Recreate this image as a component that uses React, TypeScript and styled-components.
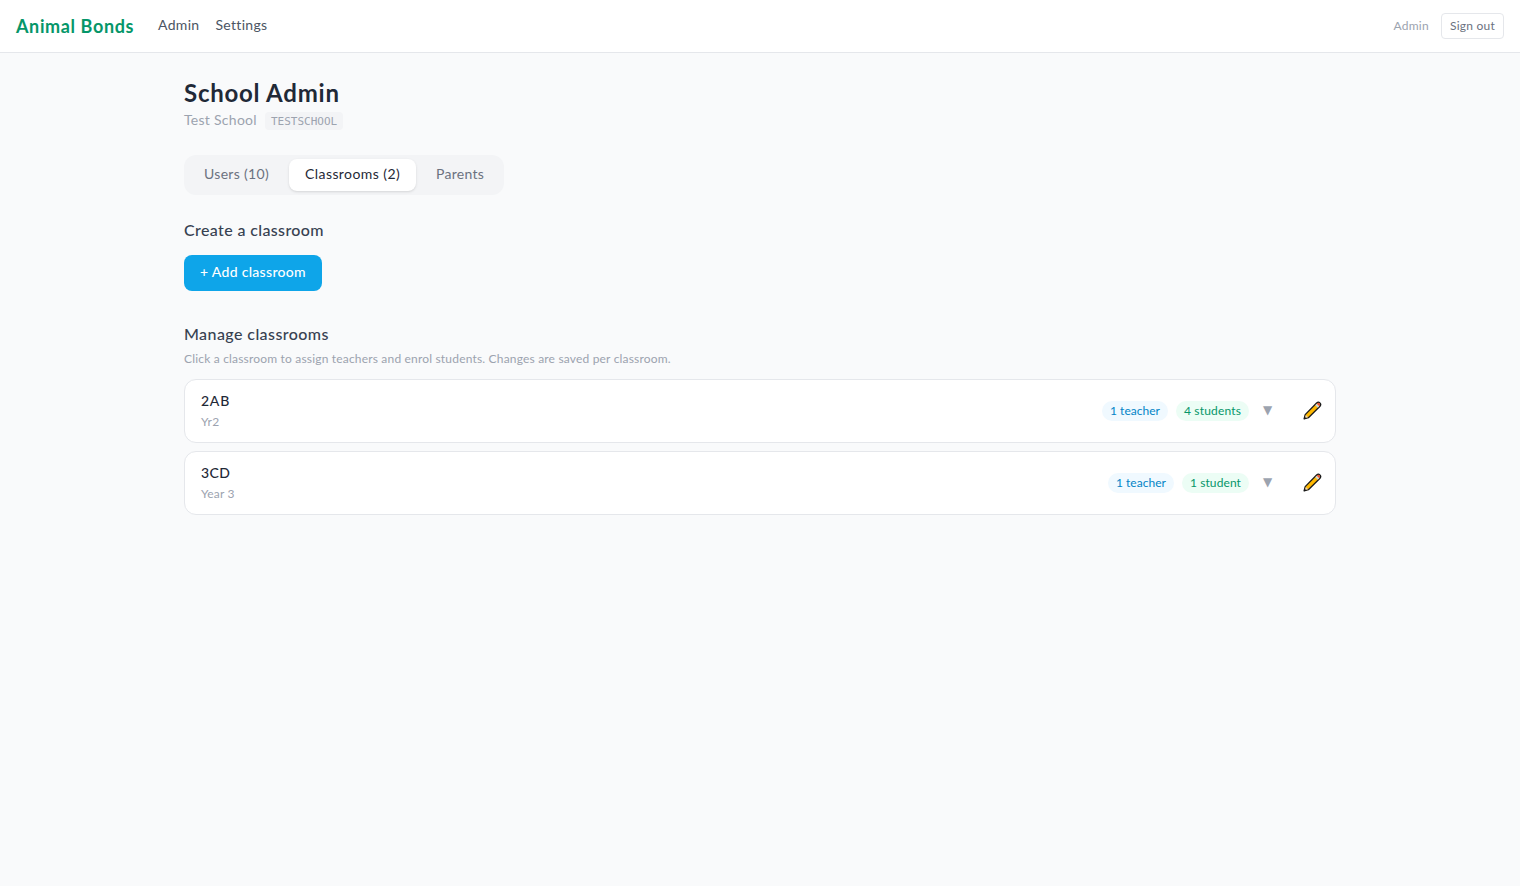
import React from "react";
import styled, { createGlobalStyle, css } from "styled-components";

const GlobalStyle = createGlobalStyle`
  *, *::before, *::after { box-sizing: border-box; }
  body {
    margin: 0;
    min-height: 100vh;
    background: #f9fafb;
    color: #1f2937;
    font-family: Lato, "Noto Sans", sans-serif;
    font-size: 14px;
    line-height: 20px;
  }
  h1, h2, p { margin: 0; }
  button { font: inherit; cursor: pointer; }
`;

type Tracked = { $track?: number };
const tracked = css<Tracked>`
  letter-spacing: ${({ $track = 0 }) => $track}px;
  white-space: nowrap;
`;

const NavBar = styled.header`
  display: flex;
  align-items: center;
  height: 53px;
  padding: 0 16px;
  background: #fff;
  border-bottom: 1px solid #e5e7eb;
`;

const Brand = styled.a`
  width: 118px;
  margin-right: 24px;
  color: #059669;
  font-size: 18px;
  line-height: 28px;
  font-weight: 700;
  letter-spacing: 0.62px;
  white-space: nowrap;
`;

const NavLinks = styled.nav`
  display: flex;
  gap: 16px;
  flex: 1;
  padding-bottom: 2px;
`;

const NavLink = styled.a<Tracked>`
  ${tracked}
  color: #4b5563;
`;

const UserName = styled.span`
  margin-right: 12px;
  color: #9ca3af;
  font-size: 12px;
  line-height: 16px;
  letter-spacing: 0.29px;
`;

const SignOut = styled.button`
  width: 63px;
  height: 26px;
  padding: 0;
  border: 1px solid #e5e7eb;
  border-radius: 4px;
  background: #fff;
  color: #6b7280;
  font-size: 12px;
  line-height: 16px;
  letter-spacing: 0.23px;
`;

const Main = styled.main`
  display: flex;
  flex-direction: column;
  max-width: 1184px;
  margin: 0 auto;
  padding: 24px 16px;
`;

const PageTitle = styled.h1`
  font-size: 24px;
  line-height: 32px;
  font-weight: 700;
  letter-spacing: 0.76px;
`;

const SchoolLine = styled.div`
  display: flex;
  align-items: center;
  gap: 8px;
  height: 22px;
  margin-bottom: 24px;
  color: #9ca3af;
  letter-spacing: 0.28px;
`;

const SchoolCode = styled.code`
  height: 18px;
  margin-top: 2px;
  padding: 2px 6px 0;
  border-radius: 4px;
  background: #f3f4f6;
  font-family: "DejaVu Sans Mono", monospace;
  font-size: 11px;
  line-height: 16px;
  letter-spacing: 0;
`;

const Tabs = styled.div`
  display: flex;
  align-self: flex-start;
  gap: 4px;
  margin-bottom: 23px;
  padding: 4px;
  border-radius: 12px;
  background: #f3f4f6;
`;

const Tab = styled.button<Tracked & { $active?: boolean }>`
  ${tracked}
  height: 32px;
  padding: 0 16px 2px;
  border: 0;
  border-radius: 8px;
  background: ${({ $active }) => ($active ? "#fff" : "transparent")};
  color: ${({ $active }) => ($active ? "#1f2937" : "#6b7280")};
  box-shadow: ${({ $active }) =>
    $active ? "0 1px 3px rgba(0,0,0,.1), 0 1px 2px -1px rgba(0,0,0,.1)" : "none"};
`;

const SectionTitle = styled.h2<Tracked>`
  ${tracked}
  color: #374151;
  font-size: 16px;
  line-height: 24px;
  font-weight: 500;
`;

const AddButton = styled.button`
  align-self: flex-start;
  width: 138px;
  height: 36px;
  margin: 13px 0 31px;
  padding: 0 0 3px;
  border: 0;
  border-radius: 8px;
  background: #0ea5e9;
  color: #fff;
  font-weight: 500;
  letter-spacing: 0.3px;
`;

const Hint = styled.p`
  margin: 5px 0 12px;
  color: #9ca3af;
  font-size: 12px;
  line-height: 16px;
  letter-spacing: 0.183px;
`;

const CardList = styled.div`
  display: flex;
  flex-direction: column;
  gap: 8px;
`;

const Card = styled.article`
  display: flex;
  align-items: center;
  height: 64px;
  padding: 0 13px 0 16px;
  border: 1px solid #e5e7eb;
  border-radius: 12px;
  background: #fff;
`;

const CardText = styled.div`
  flex: 1;
  padding-bottom: 2px;
`;

const ClassName = styled.div<Tracked>`
  ${tracked}
  font-weight: 500;
`;

const YearLabel = styled.div`
  margin-top: 3px;
  color: #9ca3af;
  font-size: 12px;
  line-height: 16px;
  letter-spacing: 0.15px;
`;

const Chip = styled.span<{ $tone: "blue" | "green"; $track: number }>`
  ${tracked}
  height: 20px;
  margin-right: 8px;
  padding: 2px 8px;
  border-radius: 10px;
  background: ${({ $tone }) => ($tone === "blue" ? "#f0f9ff" : "#ecfdf5")};
  color: ${({ $tone }) => ($tone === "blue" ? "#0284c7" : "#059669")};
  font-size: 12px;
  line-height: 16px;
`;

const Caret = styled.span`
  width: 21px;
  margin-right: 25px;
  padding-bottom: 2px;
  color: #9ca3af;
  font-family: "DejaVu Sans", sans-serif;
  font-size: 12px;
  line-height: 16px;
  text-align: center;
`;

const EditButton = styled.button`
  display: flex;
  margin-bottom: 2px;
  padding: 0;
  border: 0;
  background: none;
`;

const Pencil = () => (
  <svg width="19" height="19" viewBox="0 0 19 19" aria-hidden="true">
    <path
      d="M1.1 17.9 2.2 13.6 13.6 2Q15.3.4 16.9 1.9T17 5.3L5.4 16.7Z"
      fill="#ffb900"
      stroke="#1a1a1a"
      strokeWidth="1.3"
      strokeLinejoin="round"
    />
    <path d="M2.8 13.9 5.1 16.2 2 17Z" fill="#e6d3c4" />
    <path d="M.8 18.2 1.5 15.6 3.4 17.5Z" fill="#1a1a1a" />
    <path d="m12.2 4.2 1.5-1.5 2.6 2.6-1.5 1.5Z" fill="#cfd3d8" />
    <path d="M13.9 2.6Q15.3 1.3 16.5 2.4T16.4 5.1Z" fill="#e8404f" />
  </svg>
);

const classrooms = [
  {
    name: "2AB", nameTrack: 0.75, year: "Yr2",
    teachers: "1 teacher", teacherTrack: 0.03,
    students: "4 students", studentTrack: 0.16,
  },
  {
    name: "3CD", nameTrack: 0.35, year: "Year 3",
    teachers: "1 teacher", teacherTrack: 0.03,
    students: "1 student", studentTrack: 0.09,
  },
];

export default function App() {
  return (
    <>
      <GlobalStyle />
      <NavBar>
        <Brand>Animal Bonds</Brand>
        <NavLinks>
          <NavLink $track={0.33}>Admin</NavLink>
          <NavLink $track={0.3}>Settings</NavLink>
        </NavLinks>
        <UserName>Admin</UserName>
        <SignOut>Sign out</SignOut>
      </NavBar>
      <Main>
        <PageTitle>School Admin</PageTitle>
        <SchoolLine>
          Test School
          <SchoolCode>TESTSCHOOL</SchoolCode>
        </SchoolLine>
        <Tabs>
          <Tab $track={0.32}>Users (10)</Tab>
          <Tab $active $track={0.42}>Classrooms (2)</Tab>
          <Tab $track={0.27}>Parents</Tab>
        </Tabs>
        <SectionTitle $track={0.37}>Create a classroom</SectionTitle>
        <AddButton>+ Add classroom</AddButton>
        <SectionTitle $track={0.42}>Manage classrooms</SectionTitle>
        <Hint>
          Click a classroom to assign teachers and enrol students. Changes are saved per classroom.
        </Hint>
        <CardList>
          {classrooms.map((room) => (
            <Card key={room.name}>
              <CardText>
                <ClassName $track={room.nameTrack}>{room.name}</ClassName>
                <YearLabel>{room.year}</YearLabel>
              </CardText>
              <Chip $tone="blue" $track={room.teacherTrack}>{room.teachers}</Chip>
              <Chip $tone="green" $track={room.studentTrack}>{room.students}</Chip>
              <Caret>▼</Caret>
              <EditButton aria-label="Edit classroom">
                <Pencil />
              </EditButton>
            </Card>
          ))}
        </CardList>
      </Main>
    </>
  );
}
